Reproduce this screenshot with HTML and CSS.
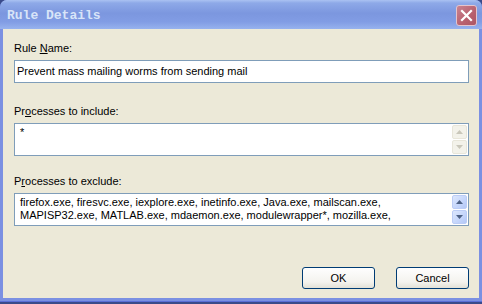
FILE: index.html
```html
<!DOCTYPE html>
<html lang="en">
<head>
    <meta charset="UTF-8">
    <title>Rule Details</title>
    <link rel="stylesheet" href="styles.css">
</head>
<body>
    <div class="window">
        <div class="titlebar">
            <span class="title">Rule Details</span>
            <button class="close-btn" aria-label="Close">
                <svg width="13" height="13" viewBox="0 0 13 13">
                    <path d="M2 2 L11 11 M11 2 L2 11" stroke="#fff" stroke-width="2.2" stroke-linecap="square"/>
                </svg>
            </button>
        </div>
        <div class="client">
            <div class="field-label">Rule <u>N</u>ame:</div>
            <div class="text-input">Prevent mass mailing worms from sending mail</div>

            <div class="field-label gap">Pr<u>o</u>cesses to include:</div>
            <div class="text-area">
                <div class="area-text">*</div>
                <div class="scrollbar disabled">
                    <div class="scroll-btn">
                        <svg width="7" height="4" viewBox="0 0 7 4"><path d="M0 4 L3.5 0 L7 4 Z" fill="currentColor"/></svg>
                    </div>
                    <div class="scroll-btn">
                        <svg width="7" height="4" viewBox="0 0 7 4"><path d="M0 0 L3.5 4 L7 0 Z" fill="currentColor"/></svg>
                    </div>
                </div>
            </div>

            <div class="field-label gap">P<u>r</u>ocesses to exclude:</div>
            <div class="text-area">
                <div class="area-text">firefox.exe, firesvc.exe, iexplore.exe, inetinfo.exe, Java.exe, mailscan.exe, MAPISP32.exe, MATLAB.exe, mdaemon.exe, modulewrapper*, mozilla.exe,</div>
                <div class="scrollbar">
                    <div class="scroll-btn">
                        <svg width="7" height="4" viewBox="0 0 7 4"><path d="M0 4 L3.5 0 L7 4 Z" fill="currentColor"/></svg>
                    </div>
                    <div class="scroll-btn">
                        <svg width="7" height="4" viewBox="0 0 7 4"><path d="M0 0 L3.5 4 L7 0 Z" fill="currentColor"/></svg>
                    </div>
                </div>
            </div>

            <div class="actions">
                <button class="btn">OK</button>
                <button class="btn">Cancel</button>
            </div>
        </div>
    </div>
</body>
</html>
```

FILE: styles.css
```css
* {
    margin: 0;
    padding: 0;
    box-sizing: border-box;
}

body {
    width: 482px;
    height: 304px;
    background: #3a4a8a;
    font-family: 'Liberation Sans', Arial, sans-serif;
    font-size: 11px;
    color: #000;
    overflow: hidden;
}

.window {
    width: 482px;
    height: 302px;
    display: flex;
    flex-direction: column;
    background: #7b90e2;
    border-radius: 7px 7px 0 0;
    border-bottom: 1px solid #5a6ed6;
}

.titlebar {
    height: 29px;
    display: flex;
    align-items: center;
    justify-content: space-between;
    padding: 0 5px 0 7px;
    border-radius: 7px 7px 0 0;
    background: linear-gradient(#aac2f2 0, #8ea9e8 3px, #7c97df 45%, #819ce4 75%, #97b2ee 100%);
}

.title {
    font-family: 'Liberation Mono', 'DejaVu Sans Mono', monospace;
    font-weight: bold;
    font-size: 13px;
    color: #d8e4f8;
    padding-top: 2px;
}

.close-btn {
    width: 21px;
    height: 21px;
    margin-top: 2px;
    border: 1px solid #e4c4cc;
    border-radius: 3px;
    background: linear-gradient(135deg, #c98390, #b8606e 60%, #ad5664);
    display: flex;
    align-items: center;
    justify-content: center;
}

.client {
    flex: 1;
    margin: 0 3px 3px 3px;
    background: #ece9d8;
    padding: 13px 10px 0 11px;
    display: flex;
    flex-direction: column;
}

.field-label {
    line-height: 13px;
    height: 13px;
    margin-bottom: 5px;
}

.field-label.gap {
    margin-top: 22px;
}

.field-label + .field-label.gap,
.text-area + .field-label.gap {
    margin-top: 19px;
}

.text-input {
    height: 23px;
    background: #fff;
    border: 1px solid #7f9db9;
    padding: 4px 2px;
    line-height: 13px;
}

.text-area {
    height: 33px;
    background: #fff;
    border: 1px solid #7f9db9;
    display: flex;
}

.area-text {
    flex: 1;
    padding: 2px 4px 0 5px;
    line-height: 13px;
    overflow: hidden;
}

.scrollbar {
    width: 17px;
    padding: 1px 1px 1px 1px;
    display: flex;
    flex-direction: column;
    gap: 1px;
    background: #fff;
}

.scroll-btn {
    flex: 1;
    border: 1px solid #bccdf6;
    border-radius: 2px;
    background: linear-gradient(135deg, #dce7fd, #c4d5fb 60%, #b4c8f6);
    color: #4d6185;
    display: flex;
    align-items: center;
    justify-content: center;
}

.scrollbar.disabled .scroll-btn {
    border-color: #e8e6da;
    background: #f3f2ea;
    color: #c9c7ba;
}

.actions {
    display: flex;
    justify-content: flex-end;
    gap: 21px;
    margin-top: 41px;
}

.btn {
    width: 73px;
    height: 22px;
    font-family: 'Liberation Sans', Arial, sans-serif;
    font-size: 11px;
    color: #000;
    border: 1px solid #003c74;
    border-radius: 3px;
    background: linear-gradient(#fefefe, #f4f3ee 70%, #e3e1d6);
}
```
